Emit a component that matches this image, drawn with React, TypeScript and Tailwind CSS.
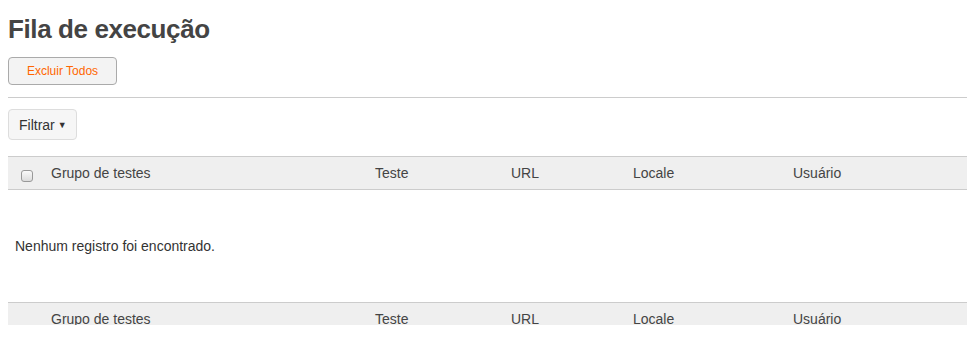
const COLUMNS = ["Grupo de testes", "Teste", "URL", "Locale", "Usuário"];

function HeaderRow({ withCheckbox }: { withCheckbox: boolean }) {
  return (
    <div className="grid grid-cols-[35px_324px_136px_122px_160px_1fr] h-[33px] bg-[#efefef] border-t border-[#cccccc] text-[14px] leading-[20px] text-[#444]">
      <div className="flex justify-center pl-[2px] pt-[13px]">
        {withCheckbox && (
          <span className="block w-[12px] h-[12px] rounded-[3px] border border-[#999] bg-gradient-to-b from-[#fafafa] to-[#dcdcdc]" />
        )}
      </div>
      {COLUMNS.map((c) => (
        <div key={c} className="pl-[8px] pt-[6px]">
          {c}
        </div>
      ))}
      <div />
    </div>
  );
}

export default function App() {
  return (
    <div className="px-[8px] bg-white font-['Liberation_Sans',Arial,sans-serif] text-[#444]">
      <h1 className="pt-[13px] text-[26px] leading-[32px] font-bold text-[#444] tracking-[-0.4px]">
        Fila de execução
      </h1>
      <button className="mt-[12px] w-[109px] h-[28px] rounded-[4px] border border-[#aaa] bg-[#f3f3f3] text-[12px] text-[#ff6600]">
        Excluir Todos
      </button>
      <hr className="mt-[12px] border-0 border-t border-[#cccccc]" />
      <button className="mt-[11px] flex items-center gap-[3px] h-[31px] pt-[2px] pl-[10px] pr-[9px] rounded-[4px] border border-[#dddddd] bg-[#f6f6f6] text-[14px] text-[#333]">
        Filtrar
        <span className="text-[9px] leading-none">▼</span>
      </button>
      <div className="mt-[16px] border-b border-[#cccccc]">
        <HeaderRow withCheckbox />
      </div>
      <div className="h-[112px] flex items-center pl-[7px] pt-[1px] text-[14px] text-[#333]">
        Nenhum registro foi encontrado.
      </div>
      <div className="h-[23px] overflow-hidden">
        <HeaderRow withCheckbox={false} />
      </div>
    </div>
  );
}
